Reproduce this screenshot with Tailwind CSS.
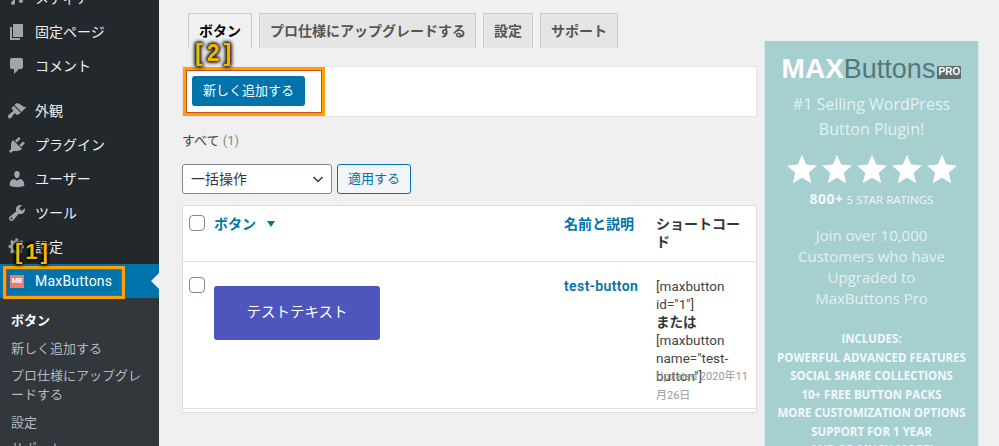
<!DOCTYPE html>
<html lang="ja">

<head>
    <meta charset="UTF-8">
    <meta name="viewport" content="width=device-width, initial-scale=1.0">
    <title>MaxButtons</title>
    <script src="https://cdn.jsdelivr.net/npm/@tailwindcss/browser@4"></script>
</head>

<body class="bg-[#f0f0f0] font-['Roboto','Noto_Sans_CJK_JP',sans-serif]">

    <div class="relative flex h-[446px] w-[999px] overflow-hidden">

        <!-- admin sidebar -->
        <nav class="relative flex h-full w-[159px] shrink-0 flex-col bg-[#23282d] text-[14px] text-[#eeeeee]">
            <div class="mt-[-19px] flex h-[34px] shrink-0 items-center">
                <svg class="ml-[7px] h-[20px] w-[20px] fill-[#a0a5aa]" viewBox="0 0 20 20"><path d="M6 2h10v11a2 2 0 1 1-2-2V6H8v9a2 2 0 1 1-2-2z"/></svg>
                <span class="ml-[8px]">メディア</span>
            </div>
            <div class="flex h-[34px] shrink-0 items-center">
                <svg class="ml-[7px] h-[20px] w-[20px] fill-[#a0a5aa]" viewBox="0 0 20 20"><path d="M6 15V2h10v13H6zm-1 1h8v2H3V5h2v11z"/></svg>
                <span class="ml-[8px]">固定ページ</span>
            </div>
            <div class="flex h-[34px] shrink-0 items-center">
                <svg class="ml-[7px] h-[20px] w-[20px] fill-[#a0a5aa]" viewBox="0 0 20 20"><path d="M5 2h9q.82 0 1.41.59T16 4v7q0 .82-.59 1.41T14 13h-2l-5 5v-5H5q-.82 0-1.41-.59T3 11V4q0-.82.59-1.41T5 2z"/></svg>
                <span class="ml-[8px]">コメント</span>
            </div>
            <div class="mt-[11px] flex h-[34px] shrink-0 items-center">
                <svg class="ml-[7px] h-[20px] w-[20px] fill-[#a0a5aa]" viewBox="0 0 20 20"><path d="M14.48 11.06L7.41 3.99l1.5-1.5c.5-.56 2.3-.47 3.51.32 1.21.8 1.43 1.28 2.91 2.1 1.18.64 2.45 1.26 4.45.85zm-.71.71L6.7 4.7 4.93 6.47c-.39.39-.39 1.02 0 1.41l1.06 1.06c.39.39.39 1.03 0 1.42-.6.6-1.43 1.11-2.21 1.69-.35.26-.7.53-1.01.84C1.43 13.25.4 15 1.5 16.9s3-.5 4-2c.6-.8 1.1-1.6 1.7-2.2.39-.39 1.03-.39 1.42 0l1.06 1.06c.39.39 1.02.39 1.41 0z"/></svg>
                <span class="ml-[8px]">外観</span>
            </div>
            <div class="flex h-[34px] shrink-0 items-center">
                <svg class="ml-[7px] h-[20px] w-[20px] fill-[#a0a5aa]" viewBox="0 0 20 20"><path d="M13.11 4.36L9.87 7.6 8 5.73l3.24-3.24c.35-.34 1.05-.2 1.56.32.52.51.66 1.21.31 1.55zm-8 1.77l.91-1.12 9.01 9.01-1.19.84c-.71.71-2.63 1.16-3.82 1.16H6.14L4.9 17.26c-.59.59-1.54.59-2.12 0-.59-.58-.59-1.53 0-2.12l1.24-1.24v-3.88c0-1.13.4-3.19 1.09-3.89zm7.26 3.97l3.24-3.24c.34-.35 1.04-.21 1.55.31.52.51.66 1.21.31 1.55l-3.24 3.25z"/></svg>
                <span class="ml-[8px]">プラグイン</span>
            </div>
            <div class="flex h-[34px] shrink-0 items-center">
                <svg class="ml-[7px] h-[20px] w-[20px] fill-[#a0a5aa]" viewBox="0 0 20 20"><path d="M10 9.25c-2.27 0-2.73-3.44-2.73-3.44C7 4.02 7.82 2 9.97 2c2.16 0 2.98 2.02 2.71 3.81 0 0-.41 3.44-2.68 3.44zm0 2.57L12.72 10c2.39 0 4.52 2.33 4.52 4.53v2.49s-3.65 1.13-7.24 1.13c-3.65 0-7.24-1.13-7.24-1.13v-2.49c0-2.25 1.94-4.48 4.47-4.48z"/></svg>
                <span class="ml-[8px]">ユーザー</span>
            </div>
            <div class="flex h-[34px] shrink-0 items-center">
                <svg class="ml-[7px] h-[20px] w-[20px] fill-[#a0a5aa]" viewBox="0 0 20 20"><path d="M16.68 9.77c-1.34 1.34-3.3 1.67-4.95.99l-5.41 6.52c-.99.99-2.59.99-3.58 0s-.99-2.59 0-3.57l6.52-5.42c-.68-1.65-.35-3.61.99-4.95 1.28-1.28 3.12-1.62 4.72-1.06l-2.89 2.89 2.82 2.82 2.86-2.87c.53 1.58.18 3.39-1.08 4.65zM3.81 16.21c.4.39 1.04.39 1.43 0 .4-.4.4-1.04 0-1.43-.39-.4-1.03-.4-1.43 0-.39.39-.39 1.03 0 1.43z"/></svg>
                <span class="ml-[8px]">ツール</span>
            </div>
            <div class="flex h-[34px] shrink-0 items-center">
                <svg class="ml-[7px] h-[20px] w-[20px] fill-[#a0a5aa]" viewBox="0 0 20 20"><path d="M10 6a4 4 0 1 0 0 8 4 4 0 0 0 0-8zm7 2.5V11l-2 .5-.6 1.4 1 1.8-1.7 1.7-1.8-1-1.4.6-.5 2H8.500l-.5-2-1.400-.6-1.800 1-1.700-1.700 1-1.800L3.500 11l-2-.5V8.500l2-.5.6-1.400-1-1.800 1.700-1.700 1.800 1L8 3.500l.5-2H11l.5 2 1.400.6 1.800-1 1.700 1.700-1 1.800.6 1.400z"/></svg>
                <span class="ml-[8px]">設定</span>
            </div>

            <!-- current menu item -->
            <div class="relative flex h-[34px] shrink-0 items-center bg-[#0073aa] text-white">
                <div class="ml-[10px] flex h-[13px] w-[14px] items-center justify-center bg-[#ef7a6c] text-[7px] font-bold leading-none text-white">MB</div>
                <span class="ml-[11px] tracking-[0.2px]">MaxButtons</span>
                <div class="absolute right-0 top-[9px] h-0 w-0 border-y-[8px] border-r-[8px] border-y-transparent border-r-[#f0f0f0]"></div>
            </div>

            <!-- submenu -->
            <div class="flex-1 bg-[#32373c] pl-[11px] pr-[8px] pt-[13px] text-[13px] leading-[19px] text-[#b4b9be]">
                <div class="font-bold text-white">ボタン</div>
                <div class="mt-[9px]">新しく追加する</div>
                <div class="mt-[8px]">プロ仕様にアップグレードする</div>
                <div class="mt-[9px]">設定</div>
                <div class="mt-[7px]">サポート</div>
            </div>
        </nav>

        <!-- page content -->
        <main class="ml-[23px] w-[575px] shrink-0 text-[13px] text-[#444444]">
            <div class="ml-[6px] mt-[13px] flex h-[35px] gap-[7px] text-[14px] font-semibold leading-[35px] text-[#555555]">
                <div class="border border-b-0 border-[#cccccc] bg-[#f0f0f0] px-[10px] text-black">ボタン</div>
                <div class="w-[217px] whitespace-nowrap border border-b-0 border-[#cccccc] bg-[#e5e5e5] px-[10px]">プロ仕様にアップグレードする</div>
                <div class="border border-b-0 border-[#cccccc] bg-[#e5e5e5] px-[10px]">設定</div>
                <div class="border border-b-0 border-[#cccccc] bg-[#e5e5e5] px-[10px]">サポート</div>
            </div>

            <div class="mt-[18px] h-[51px] border border-[#e5e5e5] bg-white pl-[9px] pt-[9px]">
                <div class="flex h-[30px] w-[113px] items-center justify-center rounded-[3px] bg-[#0073aa] text-[13px] text-white">新しく追加する</div>
            </div>

            <div class="mt-[15px] leading-[18px] text-[#444444]">すべて <span class="text-[#888888]">(1)</span></div>

            <div class="mt-[14px] flex h-[30px] gap-[5px]">
                <div class="flex w-[150px] items-center justify-between rounded-[3px] border border-[#7e8993] bg-white pl-[8px] pr-[7px] text-[14px] text-[#32373c]">
                    一括操作
                    <svg class="h-[12px] w-[12px]" viewBox="0 0 12 12" fill="none" stroke="#32373c" stroke-width="1.500"><path d="M1.500 4l4.500 4.500L10.500 4"/></svg>
                </div>
                <div class="flex w-[74px] items-center justify-center rounded-[3px] border border-[#0073aa] bg-[#f3f5f6] text-[#0073aa]">適用する</div>
            </div>

            <!-- list table -->
            <div class="mt-[11px] h-[208px] border border-[#dddddd] bg-white">
                <div class="grid h-[56px] grid-cols-[31px_350px_92px_1fr] border-b border-[#e1e1e1] pt-[9px] text-[14px] leading-[18px]">
                    <div class="pl-[6px]">
                        <div class="h-[16px] w-[16px] rounded-[4px] border border-[#7e8993] bg-white"></div>
                    </div>
                    <div class="flex h-[18px] items-center font-semibold text-[#0073aa]">ボタン
                        <svg class="ml-[11px] h-[8px] w-[8px] fill-[#0073aa]" viewBox="0 0 8 8"><path d="M0 1h8L4 7z"/></svg>
                    </div>
                    <div class="font-semibold text-[#0073aa]">名前と説明</div>
                    <div class="pr-[12px] font-semibold text-[#32373c]">ショートコード</div>
                </div>
                <div class="grid h-[147px] grid-cols-[31px_350px_92px_1fr] border-b border-[#e1e1e1] pt-[15px] leading-[18px]">
                    <div class="pl-[6px]">
                        <div class="h-[16px] w-[16px] rounded-[4px] border border-[#7e8993] bg-white"></div>
                    </div>
                    <div>
                        <div class="mt-[9px] flex h-[54px] w-[166px] items-center justify-center rounded-[3px] bg-[#4e56bd] text-[14.500px] text-white">テストテキスト</div>
                    </div>
                    <div class="text-[14px] font-semibold tracking-[0.4px] text-[#0073aa]">test-button</div>
                    <div class="pr-[4px] text-[13.500px] text-[#444444]">
                        [maxbutton id="1"]<br><strong class="text-[#32373c]">または</strong><br>[maxbutton name="test-button"]
                        <div class="mt-[-18px] text-[11px] leading-[19px] text-[#999999]">Updated 2020年11月26日</div>
                    </div>
                </div>
            </div>
        </main>

        <!-- upgrade banner -->
        <aside class="ml-[7px] mt-[41px] h-[405px] w-[215px] shrink-0 border-x border-[#d5e9ea] bg-[#a6cfd0] text-center font-['Open_Sans',sans-serif] text-[#e3f1f1]">
            <div class="mt-[14px] flex h-[28px] items-center justify-center font-['Liberation_Sans',sans-serif] leading-none">
                <span class="text-[28px] font-bold text-white">MAX</span><span class="text-[27px] text-[#55777a]">Buttons</span><span class="ml-[2px] mt-[6px] flex h-[13px] w-[24px] items-center justify-center rounded-[1px] bg-[#5b6b6c] text-[10px] font-bold text-white">PRO</span>
            </div>
            <div class="mt-[9px] text-[16px] leading-[25px]">#1 Selling WordPress<br>Button Plugin!</div>
            <div class="mt-[10px] flex justify-center gap-[1px]">
                <svg class="h-[34px] w-[34px] fill-white" viewBox="0 0 24 24"><path d="M12 2l3 6.900 7.500.7-5.700 5 1.700 7.400-6.500-3.900L5.500 22l1.700-7.400-5.700-5L9 8.900z"/></svg>
                <svg class="h-[34px] w-[34px] fill-white" viewBox="0 0 24 24"><path d="M12 2l3 6.900 7.500.7-5.700 5 1.700 7.400-6.500-3.900L5.500 22l1.700-7.400-5.700-5L9 8.900z"/></svg>
                <svg class="h-[34px] w-[34px] fill-white" viewBox="0 0 24 24"><path d="M12 2l3 6.900 7.500.7-5.700 5 1.700 7.400-6.500-3.900L5.500 22l1.700-7.400-5.700-5L9 8.900z"/></svg>
                <svg class="h-[34px] w-[34px] fill-white" viewBox="0 0 24 24"><path d="M12 2l3 6.900 7.500.7-5.700 5 1.700 7.400-6.500-3.900L5.500 22l1.700-7.400-5.700-5L9 8.900z"/></svg>
                <svg class="h-[34px] w-[34px] fill-white" viewBox="0 0 24 24"><path d="M12 2l3 6.900 7.500.7-5.700 5 1.700 7.400-6.500-3.900L5.500 22l1.700-7.400-5.700-5L9 8.900z"/></svg>
            </div>
            <div class="mt-[5px] text-[11.500px] leading-[16px] text-[#f0f8f8]"><b class="text-[14px] tracking-[0.500px]">800+</b> 5 STAR RATINGS</div>
            <div class="mt-[17px] text-[15px] leading-[21px]">Join over 10,000<br>Customers who have<br>Upgraded to<br>MaxButtons Pro</div>
            <div class="mt-[21px] whitespace-nowrap text-[11.500px] font-bold leading-[18.500px] text-[#f2f9f9]">
                INCLUDES:<br>POWERFUL ADVANCED FEATURES<br>SOCIAL SHARE COLLECTIONS<br>10+ FREE BUTTON PACKS<br>MORE CUSTOMIZATION OPTIONS<br>SUPPORT FOR 1 YEAR<br>AND SO MUCH MORE!
            </div>
        </aside>

        <!-- tutorial annotations -->
        <div class="absolute left-[3px] top-[266px] h-[33px] w-[122px] border-[3px] border-[#ff9f00] shadow-[inset_0_0_0_1px_#a8562a]"></div>
        <div class="absolute left-[15px] top-[240px] font-['Liberation_Sans',sans-serif] text-[22px] font-bold leading-[24px] tracking-[3px] text-[#f5b800] [text-shadow:0_0_2px_#000,0_0_3px_#000,0_0_4px_#000,0_0_4px_#000]">[1]</div>
        <div class="absolute left-[183px] top-[67px] h-[49px] w-[142px] border-[3px] border-[#ff9f00] shadow-[inset_0_0_0_1px_#c8501e]"></div>
        <div class="absolute left-[195px] top-[41px] font-['Liberation_Sans',sans-serif] text-[23px] font-bold leading-[25px] tracking-[4px] text-[#f5b800] [text-shadow:0_0_2px_#222,0_0_3px_#222,0_0_4px_#222,0_0_4px_#222,0_0_5px_#222]">[2]</div>
    </div>

</body>

</html>
